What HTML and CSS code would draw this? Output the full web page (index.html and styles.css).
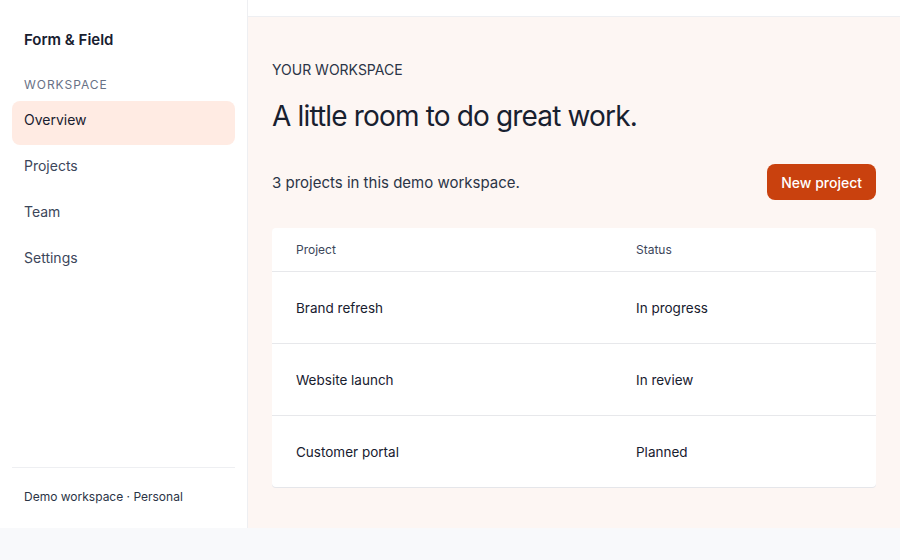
FILE: index.html
```html
<!DOCTYPE html>
<html lang="en">
<head>
    <meta charset="UTF-8">
    <meta name="viewport" content="width=device-width, initial-scale=1.0">
    <title>Overview - Form &amp; Field</title>
    <link rel="stylesheet" href="styles.css">
</head>
<body>
    <div class="app">
        <aside class="sidebar">
            <div class="brand">Form &amp; Field</div>
            <div class="nav-label">Workspace</div>
            <nav class="nav">
                <a class="nav-item active" href="#">Overview</a>
                <a class="nav-item" href="#">Projects</a>
                <a class="nav-item" href="#">Team</a>
                <a class="nav-item" href="#">Settings</a>
            </nav>
            <div class="sidebar-footer">Demo workspace · Personal</div>
        </aside>

        <main class="main">
            <div class="topbar"></div>
            <div class="content">
                <div class="eyebrow">Your workspace</div>
                <h1>A little room to do great work.</h1>

                <div class="summary">
                    <p>3 projects in this demo workspace.</p>
                    <button class="primary-button">New project</button>
                </div>

                <div class="table">
                    <div class="table-row table-head">
                        <div>Project</div>
                        <div>Status</div>
                    </div>
                    <div class="table-row">
                        <div>Brand refresh</div>
                        <div>In progress</div>
                    </div>
                    <div class="table-row">
                        <div>Website launch</div>
                        <div>In review</div>
                    </div>
                    <div class="table-row">
                        <div>Customer portal</div>
                        <div>Planned</div>
                    </div>
                </div>
            </div>
        </main>
    </div>
</body>
</html>
```

FILE: styles.css
```css
body {
    font-family: Inter, "Noto Sans", sans-serif;
    margin: 0;
    padding: 0;
    background-color: #f8f9fb;
    color: #18202f;
}
.app {
    display: flex;
    height: 528px;
}
.sidebar {
    width: 248px;
    flex-shrink: 0;
    background: white;
    border-right: 1px solid #eeeff2;
    display: flex;
    flex-direction: column;
    padding: 0 12px;
    box-sizing: border-box;
}
.brand {
    font-weight: 600;
    font-size: 15px;
    padding: 31px 12px 0;
    line-height: 18px;
}
.nav-label {
    font-size: 12px;
    letter-spacing: 0.08em;
    text-transform: uppercase;
    color: #687186;
    padding: 29px 12px 0;
    line-height: 14px;
}
.nav {
    display: flex;
    flex-direction: column;
    gap: 2px;
    margin-top: 9px;
}
.nav-item {
    display: block;
    height: 44px;
    line-height: 38px;
    padding: 0 12px;
    font-size: 14px;
    color: #3c465a;
    text-decoration: none;
    border-radius: 8px;
}
.nav-item.active {
    background-color: #ffebe3;
    color: #18202f;
}
.sidebar-footer {
    margin-top: auto;
    border-top: 1px solid #eeeff2;
    padding: 21px 12px 23px;
    font-size: 12px;
    line-height: 16px;
    color: #2b3446;
}
.main {
    flex: 1;
    background-color: #fdf6f3;
    display: flex;
    flex-direction: column;
}
.topbar {
    height: 16px;
    background: white;
    border-bottom: 1px solid #eeeff2;
}
.content {
    padding: 44px 24px 0;
}
.eyebrow {
    font-size: 14px;
    text-transform: uppercase;
    line-height: 18px;
    color: #2b3446;
}
h1 {
    font-size: 28px;
    font-weight: 400;
    letter-spacing: -0.03em;
    margin: 19px 0 0;
    line-height: 36px;
}
.summary {
    display: flex;
    align-items: center;
    justify-content: space-between;
    margin-top: 30px;
}
.summary p {
    margin: 0;
    font-size: 15px;
    color: #2b3446;
}
.primary-button {
    background-color: #c9410e;
    color: white;
    border: none;
    height: 36px;
    padding: 0 14px;
    border-radius: 8px;
    font-family: inherit;
    font-size: 14px;
    font-weight: 500;
    cursor: pointer;
}
.table {
    margin-top: 28px;
    background: white;
    border-radius: 4px;
    box-shadow: 0 1px 0 #e5e6ea;
}
.table-row {
    display: grid;
    grid-template-columns: 340px 1fr;
    padding: 0 24px;
    height: 72px;
    align-items: center;
    font-size: 13.5px;
    border-top: 1px solid #e7e8eb;
    box-sizing: border-box;
}
.table-head {
    height: 43px;
    border-top: none;
    font-size: 12px;
    color: #3c465a;
}
```
